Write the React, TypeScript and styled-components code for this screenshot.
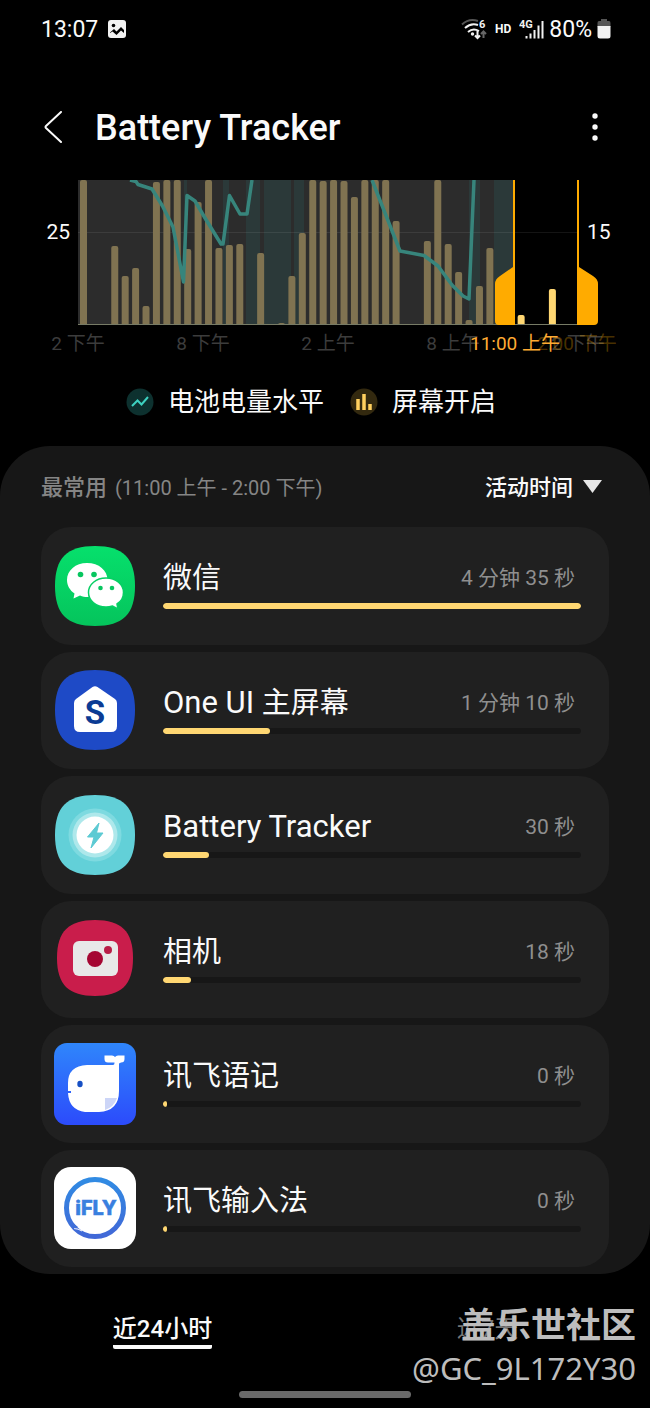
import React from 'react';
import styled, { createGlobalStyle } from 'styled-components';

const GlobalStyle = createGlobalStyle`
  * { box-sizing: border-box; }
  body {
    margin: 0;
    background: #000;
    color: #fafafa;
    font-family: Roboto, "Noto Sans CJK SC", sans-serif;
  }
  button, select { font-family: inherit; color: inherit; background: none; border: 0; padding: 0; }
  h1, h2, ul, p { margin: 0; padding: 0; font-weight: 400; }
`;

const Page = styled.div`
  display: flex;
  flex-direction: column;
  min-height: 100vh;
  background: #000;
`;

const StatusBar = styled.div`
  display: flex;
  align-items: center;
  justify-content: space-between;
  height: 58px;
  padding: 0 39px 0 41px;
  font-size: 23px;
`;

const StatusGroup = styled.div<{ $gap: number }>`
  display: flex;
  align-items: center;
  gap: ${(p) => p.$gap}px;
`;

const AppBar = styled.header`
  display: flex;
  align-items: center;
  height: 122px;
  padding: 16px 41px 0 40px;
`;

const IconButton = styled.button`
  display: flex;
  align-items: center;
  justify-content: center;
  width: 28px;
  height: 44px;
`;

const Title = styled.h1`
  flex: 1;
  padding: 2px 0 0 27px;
  font-size: 36px;
  font-weight: 500;
  line-height: 44px;
`;

const Chart = styled.svg`
  display: block;
  width: 100%;
  height: auto;
`;

const Legend = styled.div`
  display: flex;
  justify-content: center;
  gap: 26px;
  padding: 24px 28px 26px 0;
`;

const LegendItem = styled.div`
  display: flex;
  align-items: center;
  gap: 14px;
  font-size: 26px;
  line-height: 36px;
`;

const Panel = styled.section`
  padding: 0 41px 7px;
  border-radius: 50px;
  background: #171717;
`;

const PanelHeader = styled.div`
  display: flex;
  align-items: center;
  justify-content: space-between;
  height: 81px;
  padding-right: 7px;
`;

const PanelTitle = styled.h2`
  padding-top: 2px;
  color: #858585;
  font-size: 20px;
  line-height: 30px;
  strong { padding-right: 3px; font-size: 22px; font-weight: 500; }
`;

const SortLabel = styled.label`
  display: flex;
  align-items: center;
  gap: 9px;
`;

const SortSelect = styled.select`
  appearance: none;
  outline: 0;
  padding-top: 2px;
  font-size: 22px;
  font-weight: 500;
`;

const AppList = styled.ul`
  display: grid;
  grid-auto-rows: 1fr;
  gap: 7px;
  min-height: 740px;
  list-style: none;
`;

const AppCard = styled.li`
  display: flex;
  align-items: center;
  gap: 27px;
  padding: 0 28px 0 13px;
  border-radius: 30px;
  background: #202020;
`;

const AppIcon = styled.svg`
  flex: none;
  width: 82px;
  height: 82px;
`;

const AppBody = styled.div`
  display: flex;
  flex: 1;
  flex-direction: column;
  gap: 5px;
  padding-bottom: 4px;
`;

const AppLine = styled.div`
  display: flex;
  align-items: center;
  justify-content: space-between;
  height: 40px;
  padding-right: 6px;
`;

const AppName = styled.span`
  font-size: 29px;
  line-height: 40px;
`;

const LatinRun = styled.span`
  font-size: 31px;
`;

const AppTime = styled.span`
  color: #8f8f8f;
  font-size: 21px;
  line-height: 40px;
`;

const Track = styled.div`
  height: 6px;
  border-radius: 3px;
  background: #171717;
  overflow: hidden;
`;

const Fill = styled.div`
  height: 6px;
  border-radius: 3px;
  background: #ffd772;
`;

const Footer = styled.footer`
  position: relative;
  display: flex;
  flex: 1;
  flex-direction: column;
  align-items: center;
  justify-content: space-between;
  min-height: 134px;
  padding: 39px 0 10px;
`;

const Tabs = styled.nav`
  display: grid;
  grid-template-columns: 1fr 1fr;
  justify-items: center;
  width: 100%;
`;

const Tab = styled.button<{ $active?: boolean }>`
  height: 36px;
  border-bottom: 4px solid ${(p) => (p.$active ? '#fafafa' : 'transparent')};
  border-radius: 2px;
  color: ${(p) => (p.$active ? '#fafafa' : '#777')};
  font-size: 24px;
  font-weight: ${(p) => (p.$active ? 500 : 400)};
  line-height: 32px;
`;

const HomePill = styled.div`
  width: 172px;
  height: 7px;
  border-radius: 4px;
  background: #6a6a6a;
`;

const Watermark = styled.div`
  position: absolute;
  top: 25px;
  right: 14px;
  color: #bdbdbd;
  text-align: right;
`;

const WatermarkName = styled.p`
  font: 700 35px/48px "Noto Sans CJK SC", sans-serif;
`;

const WatermarkHandle = styled.p`
  font: 400 31px/42px "Noto Sans", "Noto Sans CJK SC", sans-serif;
`;

const SQUIRCLE = 'M41 1C69 1 81 13 81 41S69 81 41 81S1 69 1 41S13 1 41 1Z';

const WeChatIcon = () => (
  <AppIcon viewBox="0 0 82 82" aria-hidden="true">
    <defs>
      <linearGradient id="wechat" x1="0" y1="0" x2="0" y2="1">
        <stop offset="0" stopColor="#06e06c" />
        <stop offset="1" stopColor="#05c45c" />
      </linearGradient>
    </defs>
    <path d={SQUIRCLE} fill="url(#wechat)" />
    <path d="M33 18C21.500 18 13 25.500 13 35C13 40.500 16 45.500 20.500 48.500L19.500 53.500L26 50.500C28.500 51.500 31 52 33 52C45 52 53.500 44.500 53.500 35S45 18 33 18Z" fill="#fff" />
    <circle cx="26.500" cy="29.500" r="2.800" fill="#07c65f" />
    <circle cx="40" cy="29.500" r="2.800" fill="#07c65f" />
    <path d="M52 33C42 33 34.500 39.500 34.500 47.500S42 62 52 62C54.500 62 56.500 61.600 58.500 61L64 64L63 59C67 56.500 69.500 52.500 69.500 47.500C69.500 39.500 62 33 52 33Z" fill="#fff" stroke="#07cf64" strokeWidth="1.500" />
    <circle cx="46.500" cy="43" r="2.300" fill="#07c65f" />
    <circle cx="58" cy="43" r="2.300" fill="#07c65f" />
  </AppIcon>
);

const HomeIcon = () => (
  <AppIcon viewBox="0 0 82 82" aria-hidden="true">
    <path d={SQUIRCLE} fill="#1e4ac6" />
    <path d="M38.500 18Q41 16.500 43.500 18L61 30Q63 31.500 63 34V57Q63 63 57 63H26Q20 63 20 57V34Q20 31.500 22 30Z" fill="#fff" />
    <text x="41" y="54.500" textAnchor="middle" fill="#0b3b94" fontFamily="Roboto, sans-serif" fontSize="33" fontWeight="700">S</text>
  </AppIcon>
);

const TrackerIcon = () => (
  <AppIcon viewBox="0 0 82 82" aria-hidden="true">
    <path d={SQUIRCLE} fill="#62d0d8" />
    <circle cx="41" cy="41" r="26.500" fill="#7edae0" />
    <circle cx="41" cy="41" r="22.500" fill="#aee8eb" />
    <circle cx="41" cy="41" r="18.500" fill="#fff" />
    <path d="M45 29L33.500 43H40L37 54L49 39H42.500Z" fill="#5ccad3" stroke="#5ccad3" strokeWidth="1" strokeLinejoin="round" />
  </AppIcon>
);

const CameraIcon = () => (
  <AppIcon viewBox="0 0 82 82" aria-hidden="true">
    <path d="M41 2C67 2 79 13 79 40S67 78 41 78S3 67 3 40S15 2 41 2Z" fill="#c91d4b" />
    <rect x="19" y="23" width="45" height="35" rx="6" fill="#e8e8e8" />
    <circle cx="41" cy="41" r="8" fill="#a50632" />
    <circle cx="54" cy="32" r="4" fill="#b81d47" />
  </AppIcon>
);

const WhaleIcon = () => (
  <AppIcon viewBox="0 0 82 82" aria-hidden="true">
    <defs>
      <linearGradient id="whale" x1="0" y1="0" x2="0" y2="1">
        <stop offset="0" stopColor="#2f86fb" />
        <stop offset="1" stopColor="#2c4bfb" />
      </linearGradient>
    </defs>
    <rect width="82" height="82" rx="13" fill="url(#whale)" />
    <path d="M33 22H59Q60.500 22 60.500 20V19.500H54Q50.500 19.500 50.500 16V12.500H58Q60 12.500 61 14Q62 12.500 64 12.500H70.500V16Q70.500 19.500 67 19.500L65 20.500V48Q65 68 45 69H31Q15 67 14 50H17V48H14V40Q14 23 33 22Z" fill="#fff" />
    <ellipse cx="26" cy="41" rx="2.700" ry="3.300" fill="#164fc4" />
    <path d="M51 55H63Q60 64 51 67Z" fill="#ccd5f7" />
  </AppIcon>
);

const IflyIcon = () => (
  <AppIcon viewBox="0 0 82 82" aria-hidden="true">
    <defs>
      <linearGradient id="ifly" x1="0" y1="0" x2="0" y2="1">
        <stop offset="0" stopColor="#318be3" />
        <stop offset="1" stopColor="#4168d7" />
      </linearGradient>
    </defs>
    <rect width="82" height="82" rx="17" fill="#fff" />
    <circle cx="41" cy="41" r="28.500" fill="none" stroke="url(#ifly)" strokeWidth="5" />
    <path d="M20 61.500Q24 61.500 28 64" fill="none" stroke="#fff" strokeWidth="1" />
    <path d="M19 56L20.500 61.500L24 60Z" fill="#4070d9" />
    <text x="42" y="48" textAnchor="middle" fill="#397fdf" stroke="#397fdf" strokeWidth="0.500" fontFamily="Inter, sans-serif" fontSize="20" fontWeight="800">iFLY</text>
  </AppIcon>
);

const apps = [
  { name: '微信', time: '4 分钟 35 秒', share: 100, Icon: WeChatIcon },
  { latin: 'One UI ', name: '主屏幕', time: '1 分钟 10 秒', share: 25.6, Icon: HomeIcon },
  { latin: 'Battery Tracker', name: '', time: '30 秒', share: 11, Icon: TrackerIcon },
  { name: '相机', time: '18 秒', share: 6.6, Icon: CameraIcon },
  { name: '讯飞语记', time: '0 秒', share: 0.9, Icon: WhaleIcon },
  { name: '讯飞输入法', time: '0 秒', share: 0.9, Icon: IflyIcon },
];

// Each pair is the half-hour slot and the bar's height above the baseline.
const usage: [number, number][] = [
  [0, 145], [3, 79], [4, 49], [5, 57], [6, 19], [7, 143], [8, 145], [9, 145],
  [10, 76], [11, 123], [12, 145], [13, 77], [14, 80], [15, 81], [17, 72], [19, 2],
  [20, 49], [21, 92], [22, 145], [23, 144], [24, 145], [25, 144], [26, 128],
  [27, 145], [28, 145], [29, 145], [30, 104], [33, 84], [34, 145], [35, 81],
  [36, 53], [37, 5], [38, 39], [39, 77],
];
const selectedUsage: [number, number][] = [[42, 10], [45, 36]];
const charging: [number, number][] = [[184, 3], [223, 6], [246, 14], [264, 27], [294, 10], [469, 11], [494, 20]];

const Bar = ({ slot, height, color }: { slot: number; height: number; color: string }) => {
  const x = 80 + slot * 10.42;
  const r = Math.min(2, height);
  return (
    <path
      d={`M${x} 145V${145 - height + r}q0 ${-r} ${r} ${-r}h${7 - 2 * r}q${r} 0 ${r} ${r}V145Z`}
      fill={color}
    />
  );
};

const UsageChart = () => (
  <Chart viewBox="0 0 650 180" fontFamily='Roboto, "Noto Sans CJK SC", sans-serif' fontSize="21" role="img" aria-label="Battery Tracker">
    <rect x="78" width="437" height="145" fill="#2c2c2c" />
    {charging.map(([x, w]) => <rect key={x} x={x} width={w} height="145" fill="#2b3939" />)}
    <path d="M78 52.500H578" stroke="#fff" strokeOpacity="0.080" />
    {usage.map(([s, h]) => <Bar key={s} slot={s} height={h} color="#807351" />)}
    {selectedUsage.map(([s, h]) => <Bar key={s} slot={s} height={h} color="#ffd772" />)}
    <g fill="none" stroke="#37857c" strokeWidth="3.500" strokeLinejoin="round">
      <path d="M130 0L136 1.500L138 4.500L152 9L162.500 26L173 47L183.500 102L187 15.500L195 21L205 38L221 64H223L229.500 15.500L240 34H247L252 0" />
      <path d="M372 0L400 71L424 75.500L438 86L452 105L463 116L469 119L474 0" />
    </g>
    <path d="M78 144.500H578" stroke="#777b66" />
    <path d="M513 0H515V145H499Q495 145 495 141V104Q495 99 500 96L513 87Z" fill="#ffab00" />
    <path d="M579 0H577V145H594Q598 145 598 141V104Q598 99 593 96L579 87Z" fill="#ffab00" />
    <g fill="#fafafa">
      <text x="70" y="59" textAnchor="end">25</text>
      <text x="587" y="59">15</text>
    </g>
    <g fill="#3c3c3c" textAnchor="middle" fontSize="19">
      <text x="78" y="170">2 下午</text>
      <text x="203" y="170">8 下午</text>
      <text x="328" y="170">2 上午</text>
      <text x="453" y="170">8 上午</text>
      <text x="578" y="170">2 下午</text>
    </g>
    <g textAnchor="middle" fontSize="19">
      <text x="577" y="170" fill="#ffab00" fillOpacity="0.300">2:00 下午</text>
      <text x="515" y="170" fill="#ffab33">11:00 上午</text>
    </g>
  </Chart>
);

const PictureGlyph = () => (
  <svg width="18" height="18" viewBox="0 0 18 18" aria-hidden="true">
    <rect width="18" height="18" rx="3" fill="#f2f2f2" />
    <circle cx="5.500" cy="5.500" r="1.800" fill="#000" />
    <path d="M2 12.500L6 9L8.500 11.500L13 7L16 10V15H2Z" fill="#000" />
    <path d="M2 15.500V13L4.500 11.500L8.500 15L13 10.500L16 13V15.500Z" fill="#f2f2f2" />
  </svg>
);

const WifiGlyph = () => (
  <svg width="26" height="22" viewBox="0 0 26 22" fill="none" strokeWidth="2" aria-hidden="true">
    <path d="M1 6.500Q8 0 17 3" stroke="#555" />
    <path d="M4 10Q10 4.500 17 7M7 14Q12 9.500 18 13" stroke="#f2f2f2" />
    <circle cx="11.500" cy="16" r="1.700" fill="#f2f2f2" />
    <path d="M16.500 13V20M14 17.500L16.500 20L19 17.500" stroke="#f2f2f2" />
    <path d="M22.500 20V13.500M20 16L22.500 13.500L25 16" stroke="#666" />
    <text x="18" y="10" fill="#f2f2f2" fontFamily="Roboto, sans-serif" fontSize="11" fontWeight="700">6</text>
  </svg>
);

const SignalGlyph = () => (
  <svg width="25" height="22" viewBox="0 0 25 22" aria-hidden="true">
    <text x="0" y="10" fill="#f2f2f2" fontFamily="Roboto, sans-serif" fontSize="11" fontWeight="700">4G</text>
    <path d="M7.500 18V20.500M11.500 15.500V20.500M15.500 12V20.500M19.500 7.500V20.500M23.500 3V20.500" stroke="#f2f2f2" strokeWidth="2" />
  </svg>
);

const BatteryGlyph = () => (
  <svg width="14" height="20" viewBox="0 0 14 20" aria-hidden="true">
    <path d="M4 0H10V2H12Q13.500 2 13.500 4V8H0.500V4Q0.500 2 2 2H4Z" fill="#555" />
    <path d="M0.500 7H13.500V17Q13.500 19.500 11 19.500H3Q0.500 19.500 0.500 17Z" fill="#f2f2f2" />
  </svg>
);

const HdLabel = styled.span`
  padding: 0 3px 0 3px;
  font-size: 12px;
  font-weight: 700;
`;

export default function App() {
  return (
    <Page>
      <GlobalStyle />
      <StatusBar>
        <StatusGroup $gap={10}>
          <span>13:07</span>
          <PictureGlyph />
        </StatusGroup>
        <StatusGroup $gap={5}>
          <WifiGlyph />
          <HdLabel>HD</HdLabel>
          <SignalGlyph />
          <span>80%</span>
          <BatteryGlyph />
        </StatusGroup>
      </StatusBar>
      <AppBar>
        <IconButton aria-label="Back">
          <svg width="20" height="32" viewBox="0 0 20 32" fill="none" stroke="#fafafa" strokeWidth="2" strokeLinecap="round" strokeLinejoin="round">
            <path d="M17 1L2 15Q1 16 2 17L17 31" />
          </svg>
        </IconButton>
        <Title>Battery Tracker</Title>
        <IconButton aria-label="More options">
          <svg width="6" height="28" viewBox="0 0 6 28" fill="#fafafa">
            <circle cx="3" cy="3" r="2.700" />
            <circle cx="3" cy="14" r="2.700" />
            <circle cx="3" cy="25" r="2.700" />
          </svg>
        </IconButton>
      </AppBar>
      <UsageChart />
      <Legend>
        <LegendItem>
          <svg width="28" height="28" viewBox="0 0 28 28" aria-hidden="true">
            <circle cx="14" cy="14" r="13.500" fill="#0d312f" />
            <path d="M6 18L11.500 12.500L15.500 16.500L22 9" fill="none" stroke="#3dd1c0" strokeWidth="2" />
          </svg>
          电池电量水平
        </LegendItem>
        <LegendItem>
          <svg width="28" height="28" viewBox="0 0 28 28" aria-hidden="true">
            <circle cx="14" cy="14" r="13.500" fill="#33290f" />
            <path d="M8 11V22M14 6V22M20 16V22" stroke="#ffd05f" strokeWidth="3.500" />
          </svg>
          屏幕开启
        </LegendItem>
      </Legend>
      <Panel>
        <PanelHeader>
          <PanelTitle><strong>最常用</strong> (11:00 上午 - 2:00 下午)</PanelTitle>
          <SortLabel>
            <SortSelect aria-label="排序">
              <option>活动时间</option>
            </SortSelect>
            <svg width="19" height="14" viewBox="0 0 19 14" fill="#e6e6e6" aria-hidden="true">
              <path d="M0 0H19L9.500 13Z" />
            </svg>
          </SortLabel>
        </PanelHeader>
        <AppList>
          {apps.map(({ latin, name, time, share, Icon }) => (
            <AppCard key={time + name}>
              <Icon />
              <AppBody>
                <AppLine>
                  <AppName>{latin && <LatinRun>{latin}</LatinRun>}{name}</AppName>
                  <AppTime>{time}</AppTime>
                </AppLine>
                <Track>
                  <Fill style={{ width: `${share}%` }} />
                </Track>
              </AppBody>
            </AppCard>
          ))}
        </AppList>
      </Panel>
      <Footer>
        <Tabs>
          <Tab $active>近24小时</Tab>
          <Tab>近7天</Tab>
        </Tabs>
        <HomePill />
        <Watermark>
          <WatermarkName>盖乐世社区</WatermarkName>
          <WatermarkHandle>@GC_9L172Y30</WatermarkHandle>
        </Watermark>
      </Footer>
    </Page>
  );
}
